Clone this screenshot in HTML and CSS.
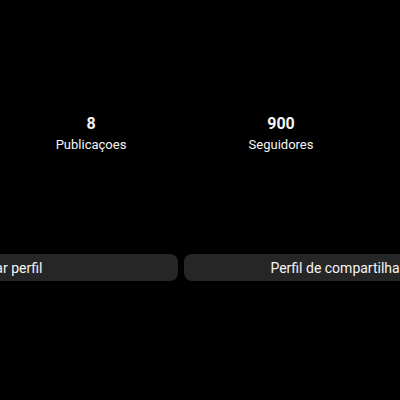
FILE: index.html
```html
<!DOCTYPE html>
<html lang="pt">
<head>
<meta charset="utf-8">
<link rel="stylesheet" href="styles.css">
</head>
<body>
<div class="page">
  <div class="stats">
    <div class="stat"><div class="num">8</div><div class="label">Publicaçoes</div></div>
    <div class="stat"><div class="num">900</div><div class="label">Seguidores</div></div>
  </div>
  <div class="actions">
    <button class="btn">Editar perfil</button>
    <button class="btn">Perfil de compartilhamento</button>
  </div>
</div>
</body>
</html>
```

FILE: styles.css
```css
html, body {
  margin: 0;
  padding: 0;
  background: #000;
  width: 400px;
  height: 400px;
  overflow: hidden;
}
.page {
  font-family: Roboto, "Liberation Sans", sans-serif;
  color: #f5f5f5;
  padding-top: 114px;
}
.stats {
  display: flex;
  margin-left: -3px;
  gap: 2px;
}
.stat {
  width: 188px;
  flex: none;
  text-align: center;
}
.num {
  font-size: 16px;
  font-weight: 700;
  line-height: 20px;
}
.label {
  font-size: 13px;
  line-height: 18px;
  margin-top: 2px;
}
.actions {
  display: flex;
  gap: 6px;
  margin-top: 100px;
  margin-left: -164px;
}
.btn {
  flex: none;
  width: 342px;
  height: 27px;
  border: 0;
  border-radius: 8px;
  background: #262626;
  color: #f5f5f5;
  font-family: Roboto, "Liberation Sans", sans-serif;
  font-size: 14px;
  font-weight: 400;
  padding: 0;
}
```
